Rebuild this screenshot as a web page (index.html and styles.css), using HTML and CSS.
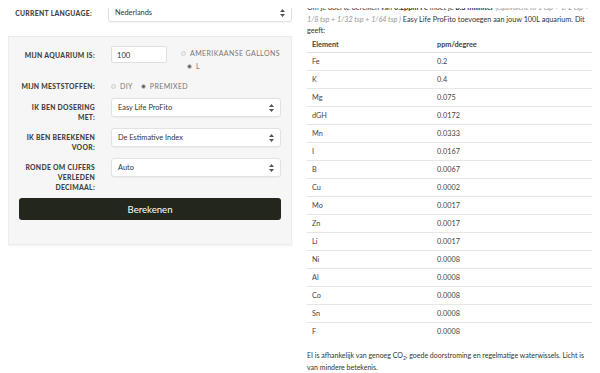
FILE: index.html
```html
<!DOCTYPE html>
<html lang="nl">
<head>
  <meta charset="UTF-8">
  <title>Meststoffen calculator</title>
  <link rel="stylesheet" href="styles.css">
</head>

<body>

<div class="page">

  <!-- Left: calculator form -->
  <div class="calc">

    <div class="lang-row">
      <label class="label">Current language:</label>
      <div class="select lang-select">
        <span>Nederlands</span>
        <svg class="arrows" width="5" height="8" viewBox="0 0 5 8"><path d="M2.5 0 L5 3 H0 Z M2.5 8 L5 5 H0 Z" fill="#555"/></svg>
      </div>
    </div>

    <div class="panel">

      <div class="row row-aquarium">
        <label class="label">Mijn aquarium is:</label>
        <div class="control aquarium">
          <div class="text-input">100</div>
          <div class="units">
            <div class="radio"><span class="dot"></span>Amerikaanse gallons</div>
            <div class="radio radio-l"><span class="dot on"></span>L</div>
          </div>
        </div>
      </div>

      <div class="row row-inline">
        <label class="label">Mijn meststoffen:</label>
        <div class="control radios">
          <div class="radio"><span class="dot"></span>DIY</div>
          <div class="radio"><span class="dot on"></span>Premixed</div>
        </div>
      </div>

      <div class="row">
        <label class="label">Ik ben dosering met:</label>
        <div class="select">
          <span>Easy Life ProFito</span>
          <svg class="arrows" width="5" height="8" viewBox="0 0 5 8"><path d="M2.5 0 L5 3 H0 Z M2.5 8 L5 5 H0 Z" fill="#555"/></svg>
        </div>
      </div>

      <div class="row">
        <label class="label">Ik ben berekenen voor:</label>
        <div class="select">
          <span>De Estimative Index</span>
          <svg class="arrows" width="5" height="8" viewBox="0 0 5 8"><path d="M2.5 0 L5 3 H0 Z M2.5 8 L5 5 H0 Z" fill="#555"/></svg>
        </div>
      </div>

      <div class="row">
        <label class="label">Ronde om cijfers verleden decimaal:</label>
        <div class="select">
          <span>Auto</span>
          <svg class="arrows" width="5" height="8" viewBox="0 0 5 8"><path d="M2.5 0 L5 3 H0 Z M2.5 8 L5 5 H0 Z" fill="#555"/></svg>
        </div>
      </div>

      <button class="btn">Berekenen</button>
    </div>
  </div>

  <!-- Right: results -->
  <div class="results">
    <p class="intro">
      Om je doel te bereiken van <strong>0.2ppm Fe</strong> moet je <strong>8.3 milliliter</strong>
      <em>(equivalent to 1 tsp + 1/2 tsp + 1/8 tsp + 1/32 tsp + 1/64 tsp )</em> Easy Life ProFito toevoegen aan jouw 100L aquarium. Dit geeft:
    </p>

    <table class="elements">
      <thead>
        <tr><th>Element</th><th>ppm/degree</th></tr>
      </thead>
      <tbody id="element-rows"></tbody>
    </table>

    <p class="note">
      EI is afhankelijk van genoeg CO<sub>2</sub>, goede doorstroming en regelmatige waterwissels. Licht is van mindere betekenis.
    </p>
  </div>

</div>

<script>
  const elements = [
    ["Fe", "0.2"], ["K", "0.4"], ["Mg", "0.075"], ["dGH", "0.0172"],
    ["Mn", "0.0333"], ["I", "0.0167"], ["B", "0.0067"], ["Cu", "0.0002"],
    ["Mo", "0.0017"], ["Zn", "0.0017"], ["Li", "0.0017"], ["Ni", "0.0008"],
    ["Al", "0.0008"], ["Co", "0.0008"], ["Sn", "0.0008"], ["F", "0.0008"]
  ];

  const rows = document.getElementById('element-rows');
  elements.forEach(el => {
    rows.innerHTML += `<tr><td>${el[0]}</td><td>${el[1]}</td></tr>`;
  });
</script>

</body>
</html>
```

FILE: styles.css
```css
body {
  margin: 8px;
  background: #fff;
  font-family: Lato, sans-serif;
  color: #333;
}

.page {
  display: flex;
  gap: 15px;
  align-items: flex-start;
}

.calc {
  width: 284px;
  flex: none;
}

.label {
  font-family: Lato, sans-serif;
  font-weight: 900;
  font-size: 6.8px;
  letter-spacing: 0.3px;
  text-transform: uppercase;
  color: #444;
  text-align: right;
  line-height: 10px;
}

/* language row */
.lang-row {
  display: grid;
  grid-template-columns: 84px 1fr;
  gap: 16px;
  align-items: center;
  margin-top: -5px;
}

.lang-row .label {
  white-space: nowrap;
}

.lang-select {
  height: 18px;
}

.select {
  position: relative;
  display: flex;
  align-items: center;
  height: 17px;
  padding: 0 6px;
  background: #fff;
  border: 1px solid #e2e2e2;
  border-radius: 3px;
  box-shadow: 0 1px 1px rgba(0,0,0,0.04);
  font-size: 7.4px;
  color: #333;
}

.select .arrows {
  position: absolute;
  right: 6px;
  top: 50%;
  margin-top: -4px;
}

/* form panel */
.panel {
  margin-top: 14px;
  background: #f6f6f6;
  border: 1px solid #ececec;
  box-shadow: 0 1px 2px rgba(0,0,0,0.06);
  padding: 9px 10px 24px 10px;
}

.row {
  display: grid;
  grid-template-columns: 76px 1fr;
  gap: 16px;
  align-items: start;
  margin-bottom: 6px;
}

.row .label {
  padding-top: 4px;
}

.row-aquarium {
  margin-bottom: 10px;
}

.aquarium {
  display: flex;
  gap: 14px;
}

.text-input {
  width: 44px;
  height: 15px;
  padding: 0 5px;
  display: flex;
  align-items: center;
  background: #fff;
  border: 1px solid #dedede;
  border-radius: 2px;
  font-size: 7.6px;
}

.units {
  padding-top: 3px;
  display: flex;
  flex-direction: column;
  gap: 4px;
}

.radio-l {
  padding-left: 6px;
}

.radio {
  display: flex;
  align-items: center;
  white-space: nowrap;
  font-size: 7px;
  letter-spacing: 0.4px;
  text-transform: uppercase;
  color: #777;
  line-height: 9px;
}

.dot {
  width: 5px;
  height: 5px;
  border-radius: 50%;
  border: 1px solid #d0d0d0;
  background: #eee;
  margin-right: 4px;
  box-sizing: border-box;
}

.dot.on {
  background: #666;
  border: 1px solid #ccc;
}

.row-inline {
  align-items: center;
  margin-bottom: 7px;
}

.row-inline .label {
  padding-top: 0;
}

.radios {
  display: flex;
  gap: 8px;
}

.btn {
  display: block;
  width: 100%;
  height: 22px;
  margin-top: 6px;
  border: none;
  border-radius: 3px;
  background: #23261c;
  color: #fff;
  font-family: Lato, sans-serif;
  font-size: 9.6px;
}

/* results */
.results {
  width: 285px;
  font-size: 7px;
}

.intro {
  margin: -6px 0 0 0;
  line-height: 11.5px;
  font-size: 7.25px;
}

.intro em {
  color: #999;
}

.elements {
  width: 100%;
  border-collapse: collapse;
}

.elements th,
.elements td {
  text-align: left;
  padding: 0 5px;
  height: 17px;
  font-size: 7.3px;
  font-weight: normal;
  color: #444;
}

.elements td {
  border-top: 1px solid #e6e6e6;
}

.elements th {
  height: 15px;
  font-weight: bold;
  border-bottom: 1px solid #ddd;
}

.elements tbody tr:first-child td {
  border-top: none;
}

.elements th:first-child {
  width: 115px;
}

.note {
  margin: 9px 0 0 0;
  line-height: 12px;
}

.note sub {
  font-size: 5px;
  line-height: 0;
}
```
